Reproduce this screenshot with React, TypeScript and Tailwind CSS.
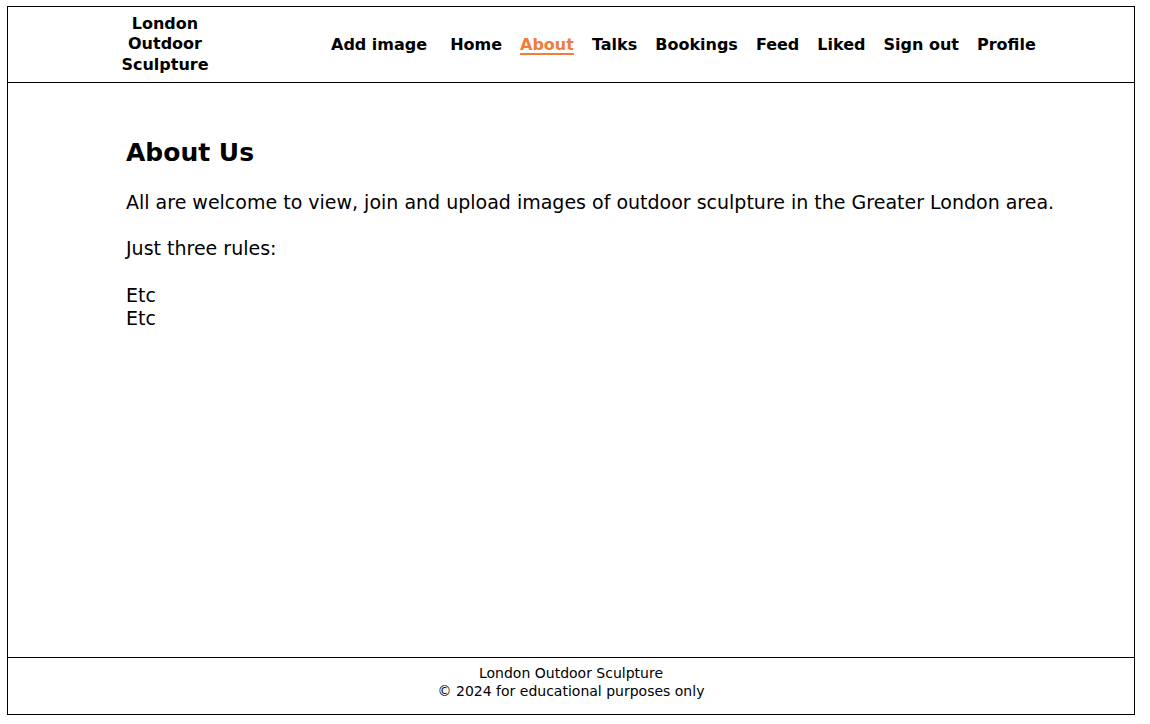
const navItems = ['Add image', 'Home', 'About', 'Talks', 'Bookings', 'Feed', 'Liked', 'Sign out', 'Profile']

export default function App() {
  return (
    <div className="bg-white" style={{ fontFamily: '"DejaVu Sans", sans-serif' }}>
      <div className="ml-[7px] mt-[6px] flex h-[709px] w-[1128px] flex-col border border-black text-black">
        <header className="flex h-[76px] shrink-0 items-center border-b border-black">
          <div className="flex w-[314px] justify-center">
            <a href="#" className="w-[110px] text-center text-[16px] font-bold leading-[20.5px]">
              London Outdoor Sculpture
            </a>
          </div>
          <nav className="ml-[9px] flex items-center gap-[18px] text-[16px] font-bold">
            {navItems.map((item) => (
              <a
                key={item}
                href="#"
                className={
                  item === 'About'
                    ? 'text-[#ef7d3b] underline decoration-2 underline-offset-[3px]'
                    : item === 'Add image'
                      ? 'mr-[5px]'
                      : ''
                }
              >
                {item}
              </a>
            ))}
          </nav>
        </header>

        <main className="flex-1 pl-[118px] pr-[40px] pt-[53px]">
          <h1 className="text-[25px] font-bold leading-[34px]">About Us</h1>
          <p className="mt-[21px] text-[19px] leading-[23px]">
            All are welcome to view, join and upload images of outdoor sculpture in the Greater London area.
          </p>
          <p className="mt-[23px] text-[19px] leading-[23px]">Just three rules:</p>
          <p className="mt-[24px] text-[19px] leading-[23px]">
            Etc
            <br />
            Etc
          </p>
        </main>

        <footer className="h-[57px] shrink-0 border-t border-black pt-[6px] text-center text-[14px] leading-[18px]">
          <div>London Outdoor Sculpture</div>
          <div>© 2024 for educational purposes only</div>
        </footer>
      </div>
    </div>
  )
}
